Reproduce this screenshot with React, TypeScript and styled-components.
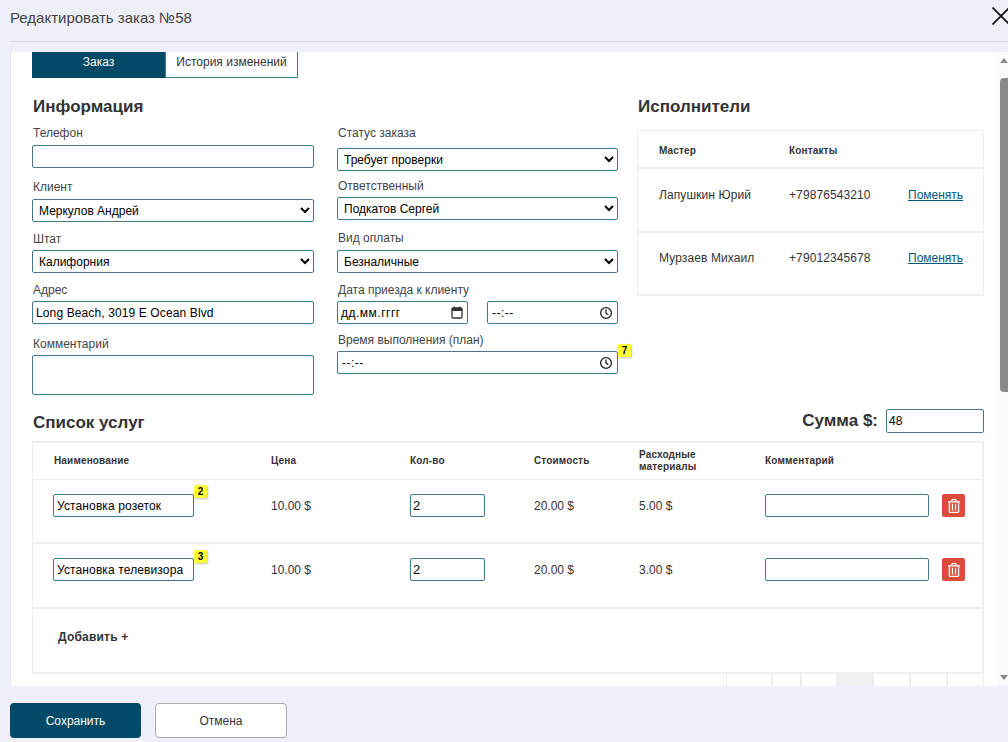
import React from 'react'
import styled, { createGlobalStyle } from 'styled-components'
import { FaRegTrashAlt } from 'react-icons/fa'

const GlobalStyle = createGlobalStyle`
  html, body {
    margin: 0;
    padding: 0;
    background: #eeeff8;
  }
  * {
    box-sizing: border-box;
  }
  body {
    font-family: "Liberation Sans", Arial, sans-serif;
    font-size: 12px;
    color: #333;
  }
`

interface FieldProps {
  label: string
  top: number
  gap: number
  children: React.ReactNode
}

const Field: React.FC<FieldProps> = ({ label, top, gap, children }) => (
  <FieldWrap $top={top}>
    <FieldLabel $gap={gap}>{label}</FieldLabel>
    {children}
  </FieldWrap>
)

const ClockIcon = () => (
  <svg width="14" height="14" viewBox="0 0 14 14" fill="none" stroke="#222" strokeWidth="1.3">
    <circle cx="7" cy="7" r="5.4" />
    <path d="M7 3.6V7.2L9.4 8.8" />
  </svg>
)

const CalendarIcon = () => (
  <svg width="12" height="13" viewBox="0 0 12 13" fill="none">
    <rect x="1" y="2" width="10" height="10" rx="1" stroke="#333" strokeWidth="1.3" />
    <rect x="1" y="2" width="10" height="3" fill="#333" />
    <path d="M3.5 0.5V2.5M8.5 0.5V2.5" stroke="#333" strokeWidth="1.2" />
  </svg>
)

const services = [
  { name: 'Установка розеток', badge: 2, badgeTop: -9, material: '5.00 $', height: 64 },
  { name: 'Установка телевизора', badge: 3, badgeTop: -8, material: '3.00 $', height: 65 },
]

const masters = [
  { name: 'Лапушкин Юрий', phone: '+79876543210' },
  { name: 'Мурзаев Михаил', phone: '+79012345678' },
]

const pagerCells = [46, 29, 36, 36, 37, 37, 37]

const App: React.FC = () => {
  return (
    <Page>
      <GlobalStyle />
      <Header>
        <Title>Редактировать заказ №58</Title>
        <CloseIcon viewBox="0 0 18 18">
          <path d="M0.5 0.5L17.5 17.5M17.5 0.5L0.5 17.5" stroke="#111" strokeWidth="1.7" fill="none" />
        </CloseIcon>
      </Header>

      <Body>
        <Panel>
          <Tabs>
            <Tab $active>Заказ</Tab>
            <Tab>История изменений</Tab>
          </Tabs>

          <TopSection>
            <LeftColumn>
              <SectionTitle>Информация</SectionTitle>
              <Field label="Телефон" top={8} gap={4}>
                <TextInput defaultValue="" />
              </Field>
              <Field label="Клиент" top={11} gap={4}>
                <Select defaultValue="Меркулов Андрей">
                  <option>Меркулов Андрей</option>
                </Select>
              </Field>
              <Field label="Штат" top={9} gap={3}>
                <Select defaultValue="Калифорния">
                  <option>Калифорния</option>
                </Select>
              </Field>
              <Field label="Адрес" top={9} gap={3}>
                <TextInput defaultValue="Long Beach, 3019 E Ocean Blvd" />
              </Field>
              <Field label="Комментарий" top={12} gap={3}>
                <TextArea />
              </Field>
            </LeftColumn>

            <MiddleColumn>
              <Field label="Статус заказа" top={0} gap={7}>
                <Select defaultValue="Требует проверки">
                  <option>Требует проверки</option>
                </Select>
              </Field>
              <Field label="Ответственный" top={7} gap={3}>
                <Select defaultValue="Подкатов Сергей">
                  <option>Подкатов Сергей</option>
                </Select>
              </Field>
              <Field label="Вид оплаты" top={10} gap={4}>
                <Select defaultValue="Безналичные">
                  <option>Безналичные</option>
                </Select>
              </Field>
              <Field label="Дата приезда к клиенту" top={9} gap={3}>
                <DateRow>
                  <PickerBox $width={131}>
                    <DateText>дд.мм.гггг</DateText>
                    <CalendarIcon />
                  </PickerBox>
                  <PickerBox $width={131}>
                    <TimeText>--:--</TimeText>
                    <ClockIcon />
                  </PickerBox>
                </DateRow>
              </Field>
              <Field label="Время выполнения (план)" top={8} gap={3}>
                <BadgeAnchor>
                  <PickerBox>
                    <TimeText>--:--</TimeText>
                    <ClockIcon />
                  </PickerBox>
                  <Badge $top={-7}>7</Badge>
                </BadgeAnchor>
              </Field>
            </MiddleColumn>

            <RightColumn>
              <SectionTitle>Исполнители</SectionTitle>
              <MastersCard>
                <MasterHead>
                  <HeadCell>Мастер</HeadCell>
                  <HeadCell>Контакты</HeadCell>
                </MasterHead>
                {masters.map((m) => (
                  <MasterRow key={m.phone}>
                    <span>{m.name}</span>
                    <span>{m.phone}</span>
                    <ChangeLink href="#">Поменять</ChangeLink>
                  </MasterRow>
                ))}
              </MastersCard>
            </RightColumn>
          </TopSection>

          <ServicesBar>
            <SectionTitle>Список услуг</SectionTitle>
            <SumGroup>
              <SectionTitle>Сумма $:</SectionTitle>
              <SumInput defaultValue="48" />
            </SumGroup>
          </ServicesBar>

          <ServicesTable>
            <ServiceHead>
              <HeadCell>Наименование</HeadCell>
              <HeadCell>Цена</HeadCell>
              <HeadCell>Кол-во</HeadCell>
              <HeadCell>Стоимость</HeadCell>
              <HeadCell>
                Расходные
                <br />
                материалы
              </HeadCell>
              <HeadCell>Комментарий</HeadCell>
            </ServiceHead>

            {services.map((s) => (
              <ServiceRow key={s.name} $height={s.height}>
                <BadgeAnchor>
                  <TextInput defaultValue={s.name} />
                  <Badge $top={s.badgeTop}>{s.badge}</Badge>
                </BadgeAnchor>
                <span>10.00 $</span>
                <QtyInput defaultValue="2" />
                <span>20.00 $</span>
                <span>{s.material}</span>
                <CommentInput />
                <TrashButton>
                  <FaRegTrashAlt size={14} />
                </TrashButton>
              </ServiceRow>
            ))}

            <AddRow>Добавить +</AddRow>
          </ServicesTable>

          <Pager>
            {pagerCells.map((w, i) => (
              <PagerCell key={i} $width={w} $active={i === 3} />
            ))}
          </Pager>
        </Panel>

        <ScrollTrack>
          <ArrowUp />
          <ScrollThumb />
          <ArrowDown />
        </ScrollTrack>
      </Body>

      <Footer>
        <SaveButton>Сохранить</SaveButton>
        <CancelButton>Отмена</CancelButton>
      </Footer>
    </Page>
  )
}

const Page = styled.div`
  width: 1008px;
  height: 742px;
  overflow: hidden;
  background: #eeeff8;
`

const Header = styled.div`
  height: 42px;
  margin-left: 10px;
  border-bottom: 1px solid #dcdde3;
  display: flex;
  align-items: center;
  justify-content: space-between;
  padding-bottom: 6px;
`

const Title = styled.div`
  font-size: 15px;
  color: #444;
`

const CloseIcon = styled.svg`
  width: 18px;
  height: 18px;
  margin-right: -2px;
  margin-top: -4px;
  flex-shrink: 0;
`

const Body = styled.div`
  margin: 10px 0 0 10px;
  height: 634px;
  display: flex;
`

const Panel = styled.div`
  width: 987px;
  height: 634px;
  overflow: hidden;
  background: #fff;
  border-left: 1px solid #e6e6e6;
  padding: 0 13px 0 21px;
`

const Tabs = styled.div`
  display: flex;
  height: 26px;
`

const Tab = styled.div<{ $active?: boolean }>`
  width: 133px;
  display: flex;
  align-items: center;
  justify-content: center;
  padding-bottom: 5px;
  font-size: 12px;
  background: ${(p) => (p.$active ? '#004a68' : '#fff')};
  color: ${(p) => (p.$active ? '#fff' : '#333')};
  border: 1px solid ${(p) => (p.$active ? '#004a68' : '#45788f')};
  border-top: 0;
`

const TopSection = styled.div`
  display: flex;
  margin-top: 19px;
`

const LeftColumn = styled.div`
  width: 282px;
  flex-shrink: 0;
`

const MiddleColumn = styled.div`
  width: 281px;
  flex-shrink: 0;
  margin-left: 23px;
  padding-top: 28px;
`

const RightColumn = styled.div`
  width: 347px;
  flex-shrink: 0;
  margin-left: 19px;
`

const SectionTitle = styled.div`
  font-size: 17px;
  line-height: 20px;
  font-weight: 700;
  color: #333;
  padding-left: 1px;
`

const FieldWrap = styled.div<{ $top: number }>`
  margin-top: ${(p) => p.$top}px;
`

const FieldLabel = styled.div<{ $gap: number }>`
  font-size: 12px;
  line-height: 16px;
  color: #444;
  padding-left: 1px;
  margin-bottom: ${(p) => p.$gap}px;
`

const TextInput = styled.input`
  display: block;
  width: 100%;
  height: 23px;
  padding: 0 3px;
  border: 1px solid #45788f;
  border-radius: 2px;
  background: #fff;
  font-family: "Liberation Sans", Arial, sans-serif;
  font-size: 12px;
  letter-spacing: 0.12px;
  color: #000;
  outline: none;
`

const TextArea = styled.textarea`
  display: block;
  width: 100%;
  height: 40px;
  border: 1px solid #45788f;
  border-radius: 2px;
  background: #fff;
  resize: none;
  outline: none;
`

const Select = styled.select`
  display: block;
  width: 100%;
  height: 23px;
  padding: 0 2px;
  border: 1px solid #45788f;
  border-radius: 2px;
  background: #fff;
  font-family: "Liberation Sans", Arial, sans-serif;
  font-size: 12px;
  color: #000;
  outline: none;
`

const DateRow = styled.div`
  display: flex;
  justify-content: space-between;
`

const PickerBox = styled.div<{ $width?: number }>`
  width: ${(p) => (p.$width ? `${p.$width}px` : '100%')};
  height: 23px;
  padding: 0 4px 0 3px;
  display: flex;
  align-items: center;
  justify-content: space-between;
  border: 1px solid #45788f;
  border-radius: 2px;
  background: #fff;
  font-size: 12px;
  color: #000;
`

const DateText = styled.span`
  letter-spacing: 0.5px;
`

const TimeText = styled(DateText)`
  padding-left: 1px;
`

const BadgeAnchor = styled.div`
  position: relative;
`

const Badge = styled.div<{ $top: number }>`
  position: absolute;
  top: ${(p) => p.$top}px;
  left: 100%;
  width: 13px;
  height: 13px;
  display: flex;
  align-items: center;
  justify-content: center;
  font-size: 10px;
  font-weight: 700;
  color: #000;
  background: #ffff33;
  border-radius: 1px;
  box-shadow: 1px 1px 2px rgba(0, 0, 0, 0.25);
`

const MastersCard = styled.div`
  margin-top: 13px;
  height: 166px;
  border: 1px solid #eeeeee;
  border-bottom-width: 2px;
`

const HeadCell = styled.div`
  font-size: 10px;
  line-height: 12px;
  font-weight: 700;
  letter-spacing: 0.15px;
  color: #333;
`

const MasterHead = styled.div`
  height: 38px;
  display: grid;
  grid-template-columns: 130px 1fr;
  align-items: center;
  padding: 4px 0 0 21px;
  border-bottom: 2px solid #eeeeee;
`

const MasterRow = styled.div`
  height: 62px;
  display: grid;
  grid-template-columns: 130px 119px 1fr;
  padding: 19px 0 0 21px;
  font-size: 12px;
  line-height: 14px;
  letter-spacing: 0.1px;
  color: #333;
  & + & {
    height: 64px;
    padding-top: 18px;
    border-top: 2px solid #eeeeee;
  }
`

const ChangeLink = styled.a`
  color: #00587c;
  text-decoration: underline;
  letter-spacing: 0;
`

const ServicesBar = styled.div`
  margin-top: 14px;
  height: 24px;
  display: flex;
  align-items: center;
  justify-content: space-between;
  padding-top: 4px;
`

const SumGroup = styled.div`
  display: flex;
  align-items: center;
  gap: 8px;
  margin-top: -4px;
`

const SumInput = styled(TextInput)`
  width: 98px;
  height: 24px;
  padding: 0 2px;
  letter-spacing: 0;
`

const ServicesTable = styled.div`
  margin-top: 8px;
  border: 1px solid #eeeeee;
  border-top-width: 2px;
  border-right-width: 2px;
  border-bottom-width: 2px;
`

const serviceColumns = '217px 139px 124px 105px 126px 177px 1fr'

const ServiceHead = styled.div`
  height: 37px;
  display: grid;
  grid-template-columns: ${serviceColumns};
  align-items: center;
  padding-left: 21px;
  border-bottom: 1px solid #eeeeee;
`

const ServiceRow = styled.div<{ $height: number }>`
  height: ${(p) => p.$height}px;
  display: grid;
  grid-template-columns: ${serviceColumns};
  grid-template-rows: 23px;
  align-items: center;
  padding: 14px 0 0 21px;
  border-bottom: 2px solid #eeeeee;
  font-size: 12px;
  color: #333;
  & > ${BadgeAnchor} {
    width: 141px;
    margin-left: -1px;
  }
`

const QtyInput = styled(TextInput)`
  width: 75px;
  font-size: 13px;
  letter-spacing: 0;
  padding: 0 2px;
`

const CommentInput = styled(TextInput)`
  width: 164px;
`

const TrashButton = styled.button`
  width: 23px;
  height: 23px;
  padding: 0;
  border: 0;
  border-radius: 2px;
  display: flex;
  align-items: center;
  justify-content: center;
  background: #dd4b39;
  color: #fff;
`

const AddRow = styled.div`
  height: 63px;
  padding: 21px 0 0 25px;
  font-size: 12px;
  line-height: 14px;
  font-weight: 700;
  letter-spacing: 0.2px;
  color: #333;
`

const Pager = styled.div`
  display: flex;
  justify-content: flex-end;
`

const PagerCell = styled.div<{ $width: number; $active?: boolean }>`
  width: ${(p) => p.$width}px;
  height: 20px;
  border-left: 1px solid #eeeeee;
  border-right: 1px solid #eeeeee;
  background: ${(p) => (p.$active ? '#f1f1f1' : '#fff')};
`

const ScrollTrack = styled.div`
  width: 11px;
  height: 634px;
  background: #fafafa;
  display: flex;
  flex-direction: column;
  align-items: flex-end;
`

const ArrowUp = styled.div`
  width: 0;
  height: 0;
  margin: 6px 0 0;
  border-left: 4px solid transparent;
  border-right: 4px solid transparent;
  border-bottom: 5px solid #8a8a8a;
`

const ArrowDown = styled.div`
  width: 0;
  height: 0;
  margin: auto 0 6px;
  border-left: 4px solid transparent;
  border-right: 4px solid transparent;
  border-top: 5px solid #8a8a8a;
`

const ScrollThumb = styled.div`
  width: 8px;
  height: 314px;
  margin-top: 15px;
  background: #8a8a8a;
  border-radius: 4px 0 0 4px;
`

const Footer = styled.div`
  padding: 17px 0 0 10px;
  display: flex;
  gap: 14px;
`

const SaveButton = styled.button`
  width: 131px;
  height: 35px;
  border: 0;
  border-radius: 4px;
  background: #004a68;
  color: #fff;
  font-family: "Liberation Sans", Arial, sans-serif;
  font-size: 12px;
`

const CancelButton = styled.button`
  width: 132px;
  height: 35px;
  border: 1px solid #aaaaaa;
  border-radius: 4px;
  background: #fff;
  color: #333;
  font-family: "Liberation Sans", Arial, sans-serif;
  font-size: 12px;
`

export default App
